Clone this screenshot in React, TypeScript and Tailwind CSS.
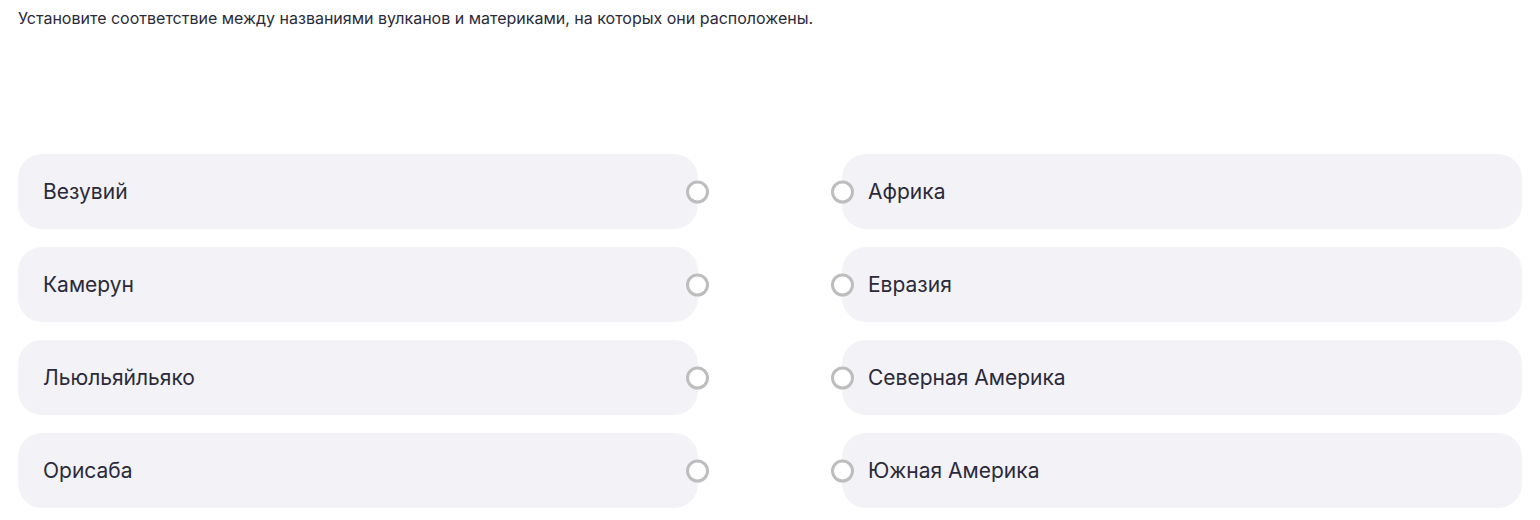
import React from 'react';

const LEFT = ['Везувий', 'Камерун', 'Льюльяйльяко', 'Орисаба'];
const RIGHT = ['Африка', 'Евразия', 'Северная Америка', 'Южная Америка'];

function Dot({ side }: { side: 'left' | 'right' }) {
  return (
    <span
      className={
        'absolute top-1/2 h-[23px] w-[23px] -translate-y-1/2 rounded-full border-[3px] border-[#bdbdbd] bg-white ' +
        (side === 'right' ? 'right-[-11px]' : 'left-[-11px]')
      }
    />
  );
}

export default function App() {
  return (
    <div className="min-h-[520px] bg-white px-[18px] pt-[6px] text-[#2a2a3a]" style={{ fontFamily: 'Inter, "Noto Sans", sans-serif' }}>
      <p className="text-[16px] leading-6">
        Установите соответствие между названиями вулканов и материками, на которых они расположены.
      </p>

      <div className="mt-[124px] grid grid-cols-2 gap-x-[144px] gap-y-[18px]">
        {LEFT.map((name, i) => (
          <React.Fragment key={name}>
            <div className="relative flex h-[75px] items-center rounded-[24px] bg-[#f3f2f7] pl-[25px] text-[21px]">
              {name}
              <Dot side="right" />
            </div>
            <div className="relative flex h-[75px] items-center rounded-[24px] bg-[#f3f2f7] pl-[26px] text-[21px]">
              {RIGHT[i]}
              <Dot side="left" />
            </div>
          </React.Fragment>
        ))}
      </div>
    </div>
  );
}
